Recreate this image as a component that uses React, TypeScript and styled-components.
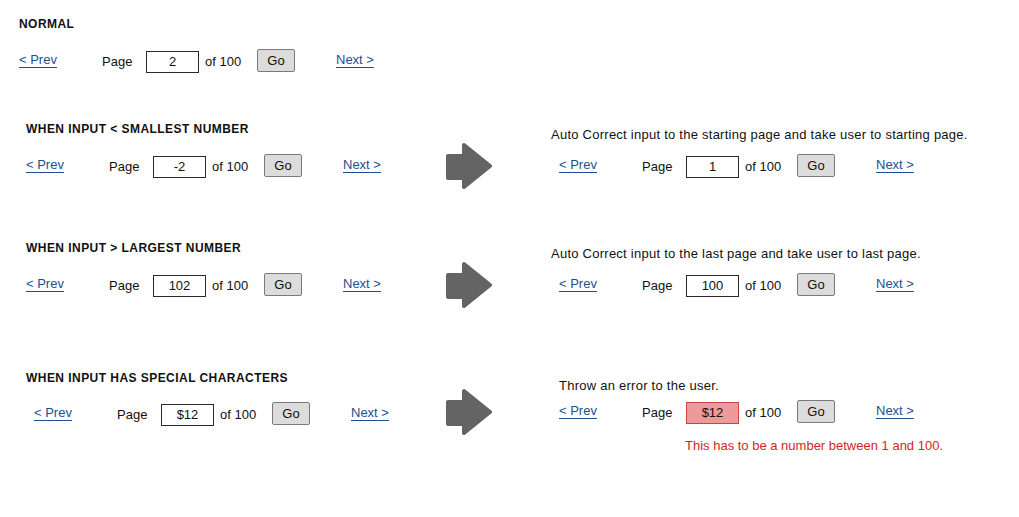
import styled, { createGlobalStyle } from "styled-components"

const GlobalStyle = createGlobalStyle`
    html, body {
        margin: 0;
        padding: 0;
        background: #ffffff;
    }
    body {
        font-family: "Liberation Sans", Arial, sans-serif;
        font-size: 13px;
        color: #111111;
    }
`

type PaginationProps = {
    value: string
    error?: boolean
    indent?: number
}

function Pagination({ value, error, indent = 0 }: PaginationProps) {
    return (
        <PagerRow $indent={indent}>
            <PagerLink href="#">&lt; Prev</PagerLink>
            <PagerLabel>Page</PagerLabel>
            <PageInput $error={error} value={value} readOnly />
            <PagerLabel>of 100</PagerLabel>
            <GoButton>Go</GoButton>
            <PagerLink href="#">Next &gt;</PagerLink>
        </PagerRow>
    )
}

function ArrowIcon() {
    return (
        <ArrowBox>
            <svg width="46" height="46" viewBox="0 0 46 46">
                <path
                    d="M2 13 H18 V2 L44 23 L18 44 V35 H2 Z"
                    fill="#646464"
                    stroke="#646464"
                    strokeWidth="4"
                    strokeLinejoin="round"
                />
            </svg>
        </ArrowBox>
    )
}

export default function App() {
    return (
        <>
            <GlobalStyle />
            <Page>
                <NormalSection>
                    <SectionTitle>NORMAL</SectionTitle>
                    <Pagination value="2" />
                </NormalSection>

                <CompareSection $top={48}>
                    <CompareTitle>WHEN INPUT &lt; SMALLEST NUMBER</CompareTitle>
                    <Note $offset={0}>
                        Auto Correct input to the starting page and take user to starting page.
                    </Note>
                    <LeftPager>
                        <Pagination value="-2" />
                    </LeftPager>
                    <ArrowIcon />
                    <RightPager>
                        <Pagination value="1" />
                    </RightPager>
                </CompareSection>

                <CompareSection $top={51}>
                    <CompareTitle>WHEN INPUT &gt; LARGEST NUMBER</CompareTitle>
                    <Note $offset={0}>
                        Auto Correct input to the last page and take user to last page.
                    </Note>
                    <LeftPager>
                        <Pagination value="102" />
                    </LeftPager>
                    <ArrowIcon />
                    <RightPager>
                        <Pagination value="100" />
                    </RightPager>
                </CompareSection>

                <CompareSection $top={62} $titleGap={3}>
                    <CompareTitle>WHEN INPUT HAS SPECIAL CHARACTERS</CompareTitle>
                    <Note $offset={-5} $indent={8}>
                        Throw an error to the user.
                    </Note>
                    <LeftPager $shift={2}>
                        <Pagination value="$12" indent={8} />
                    </LeftPager>
                    <ArrowIcon />
                    <RightPager>
                        <Pagination value="$12" error />
                    </RightPager>
                    <ErrorText>This has to be a number between 1 and 100.</ErrorText>
                </CompareSection>
            </Page>
        </>
    )
}

const Page = styled.div`
    width: 1019px;
    min-height: 517px;
    box-sizing: border-box;
    padding-top: 16px;
    display: flex;
    flex-direction: column;
`

const NormalSection = styled.section`
    padding-left: 19px;
    display: flex;
    flex-direction: column;
    gap: 17px;
`

const SectionTitle = styled.h2`
    margin: 0;
    font-size: 12px;
    line-height: 16px;
    font-weight: 700;
    letter-spacing: 0.45px;
    color: #111111;
    white-space: nowrap;
`

const CompareSection = styled.section<{ $top: number; $titleGap?: number }>`
    margin-top: ${(p) => p.$top}px;
    padding-left: 26px;
    display: grid;
    grid-template-columns: 420px 46px auto;
    grid-template-rows: auto 46px auto;
    align-items: center;

    & > h2 {
        align-self: end;
        margin-bottom: ${(p) => p.$titleGap ?? 6}px;
    }
`

const CompareTitle = styled(SectionTitle)`
    grid-column: 1;
    grid-row: 1;
`

const Note = styled.p<{ $offset: number; $indent?: number }>`
    grid-column: 3;
    grid-row: 1;
    align-self: end;
    margin: 0 0 ${(p) => p.$offset}px ${(p) => 59 + (p.$indent ?? 0)}px;
    font-size: 13px;
    line-height: 16px;
    letter-spacing: 0.25px;
    white-space: nowrap;
`

const LeftPager = styled.div<{ $shift?: number }>`
    grid-column: 1;
    grid-row: 2;
    position: relative;
    top: ${(p) => p.$shift ?? 0}px;
`

const RightPager = styled.div`
    grid-column: 3;
    grid-row: 2;
    padding-left: 67px;
`

const ErrorText = styled.p`
    grid-column: 3;
    grid-row: 3;
    margin: 3px 0 0 193px;
    font-size: 13px;
    line-height: 16px;
    color: #d8232a;
    white-space: nowrap;
`

const ArrowBox = styled.div`
    grid-column: 2;
    grid-row: 2;
    width: 46px;
    height: 46px;

    svg {
        display: block;
    }
`

const PagerRow = styled.div<{ $indent: number }>`
    margin-left: ${(p) => p.$indent}px;
    height: 24px;
    display: grid;
    grid-template-columns: 83px 44px 59px 52px 79px auto;
    align-items: center;
    justify-items: start;
`

const PagerLink = styled.a`
    color: #1c4f8e;
    text-decoration: underline;
    text-underline-offset: 3px;
    font-size: 13px;
    line-height: 16px;
    position: relative;
    top: -2px;
    white-space: nowrap;
`

const PagerLabel = styled.span`
    font-size: 13px;
    line-height: 16px;
    white-space: nowrap;
`

const PageInput = styled.input<{ $error?: boolean }>`
    box-sizing: border-box;
    width: 53px;
    height: 22px;
    margin: 0;
    padding: 0 4px;
    border: 1px solid ${(p) => (p.$error ? "#c94444" : "#2a2a2a")};
    border-radius: 0;
    background: ${(p) => (p.$error ? "#ef9a9a" : "#ffffff")};
    font-family: "Liberation Sans", Arial, sans-serif;
    font-size: 13px;
    color: #111111;
    text-align: center;
    outline: none;
`

const GoButton = styled.button`
    box-sizing: border-box;
    width: 38px;
    height: 23px;
    margin: 0 0 2px 0;
    padding: 0;
    border: 1px solid #7a7a7a;
    border-radius: 2px;
    background: #dcdcdc;
    font-family: "Liberation Sans", Arial, sans-serif;
    font-size: 13px;
    color: #111111;
`
